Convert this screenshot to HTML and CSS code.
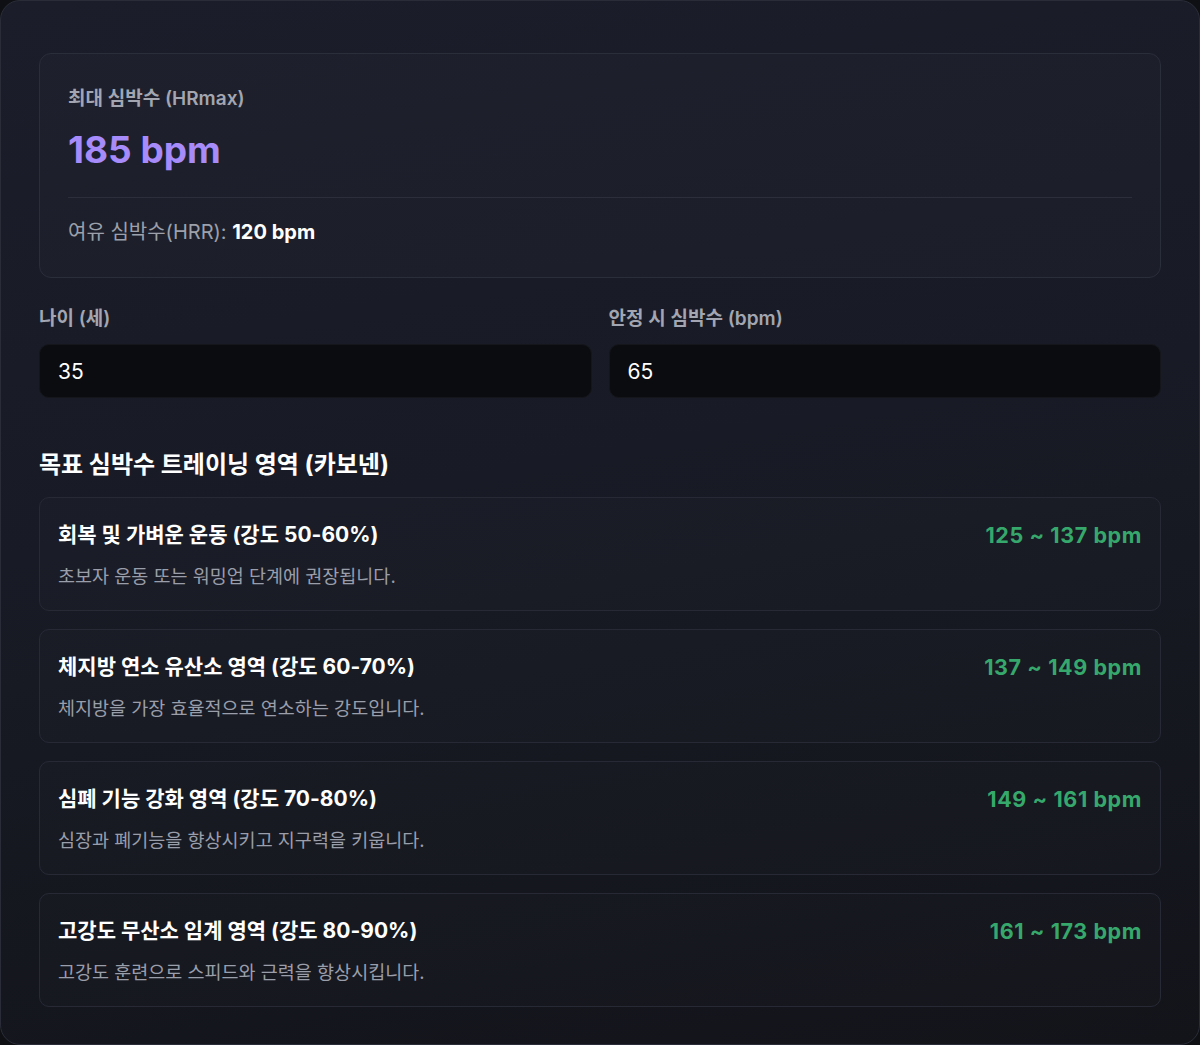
FILE: index.html
```html
<!DOCTYPE html>
<html lang="ko">
<head>
  <meta charset="UTF-8">
  <meta name="viewport" content="width=device-width, initial-scale=1.0">
  <title>심박수 계산기</title>
  <link rel="stylesheet" href="styles.css">
</head>
<body>
  <div class="calc-container">
    <div class="summary-card">
      <div class="summary-label">최대 심박수 (HRmax)</div>
      <div class="summary-value">185 bpm</div>
      <div class="summary-divider"></div>
      <div class="summary-sub">여유 심박수(HRR): <strong>120 bpm</strong></div>
    </div>

    <div class="input-row">
      <div class="input-group">
        <label for="age-input">나이 (세)</label>
        <input type="text" id="age-input" value="35">
      </div>
      <div class="input-group">
        <label for="rest-input">안정 시 심박수 (bpm)</label>
        <input type="text" id="rest-input" value="65">
      </div>
    </div>

    <h2 class="zones-title">목표 심박수 트레이닝 영역 (카보넨)</h2>

    <div class="zone-list">
      <div class="zone">
        <div class="zone-info">
          <div class="zone-name">회복 및 가벼운 운동 (강도 50-60%)</div>
          <div class="zone-desc">초보자 운동 또는 워밍업 단계에 권장됩니다.</div>
        </div>
        <div class="zone-range">125 ~ 137 bpm</div>
      </div>
      <div class="zone">
        <div class="zone-info">
          <div class="zone-name">체지방 연소 유산소 영역 (강도 60-70%)</div>
          <div class="zone-desc">체지방을 가장 효율적으로 연소하는 강도입니다.</div>
        </div>
        <div class="zone-range">137 ~ 149 bpm</div>
      </div>
      <div class="zone">
        <div class="zone-info">
          <div class="zone-name">심폐 기능 강화 영역 (강도 70-80%)</div>
          <div class="zone-desc">심장과 폐기능을 향상시키고 지구력을 키웁니다.</div>
        </div>
        <div class="zone-range">149 ~ 161 bpm</div>
      </div>
      <div class="zone">
        <div class="zone-info">
          <div class="zone-name">고강도 무산소 임계 영역 (강도 80-90%)</div>
          <div class="zone-desc">고강도 훈련으로 스피드와 근력을 향상시킵니다.</div>
        </div>
        <div class="zone-range">161 ~ 173 bpm</div>
      </div>
    </div>
  </div>
</body>
</html>
```

FILE: styles.css
```css
* {
  box-sizing: border-box;
}
body {
  margin: 0;
  background: #0f1014;
  font-family: Inter, "Noto Sans CJK KR", sans-serif;
  color: #f3f4f6;
}
.calc-container {
  width: 1200px;
  height: 1045px;
  padding: 52px 38px 38px;
  border: 1px solid #2a2d38;
  border-radius: 20px;
  background: linear-gradient(170deg, #1b1e2a 0%, #181b25 45%, #13141a 100%);
}
.summary-card {
  padding: 31px 28px 31px;
  border: 1px solid #2a2d3a;
  border-radius: 12px;
  background: rgba(255,255,255,0.015);
}
.summary-label {
  font-size: 19px;
  line-height: 28px;
  font-weight: 600;
  color: #a3a6b1;
}
.summary-value {
  margin-top: 15px;
  font-size: 37px;
  line-height: 44px;
  font-weight: 700;
  color: #a78bfa;
}
.summary-divider {
  height: 1px;
  margin-top: 25px;
  background: #2c2f3b;
}
.summary-sub {
  margin-top: 20px;
  font-size: 20px;
  line-height: 28px;
  color: #9ca0ab;
}
.summary-sub strong {
  color: #ffffff;
  font-weight: 700;
}
.input-row {
  display: grid;
  grid-template-columns: 1fr 1fr;
  gap: 17px;
  margin-top: 28px;
}
.input-group label {
  display: block;
  font-size: 19px;
  line-height: 26px;
  font-weight: 600;
  color: #a3a6b1;
  margin-bottom: 12px;
}
.input-group input {
  display: block;
  width: 100%;
  height: 54px;
  padding: 0 18px;
  border: 1px solid #15161b;
  border-radius: 10px;
  background: #0b0c10;
  color: #ffffff;
  font-family: Inter, "Noto Sans CJK KR", sans-serif;
  font-size: 21px;
  outline: none;
}
.zones-title {
  margin: 52px 0 17px;
  font-size: 24px;
  line-height: 30px;
  font-weight: 700;
  color: #ffffff;
}
.zone-list {
  display: flex;
  flex-direction: column;
  gap: 18px;
}
.zone {
  display: flex;
  justify-content: space-between;
  align-items: flex-start;
  height: 114px;
  padding: 23px 18px 0;
  border: 1px solid #272a35;
  border-radius: 10px;
  background: rgba(255,255,255,0.01);
}
.zone-name {
  font-size: 21px;
  line-height: 28px;
  font-weight: 700;
  color: #ffffff;
}
.zone-desc {
  margin-top: 14px;
  font-size: 18.5px;
  line-height: 26px;
  color: #9a9eaa;
}
.zone-range {
  font-size: 21.5px;
  line-height: 28px;
  font-weight: 700;
  letter-spacing: 0.6px;
  color: #36a86c;
}
```
